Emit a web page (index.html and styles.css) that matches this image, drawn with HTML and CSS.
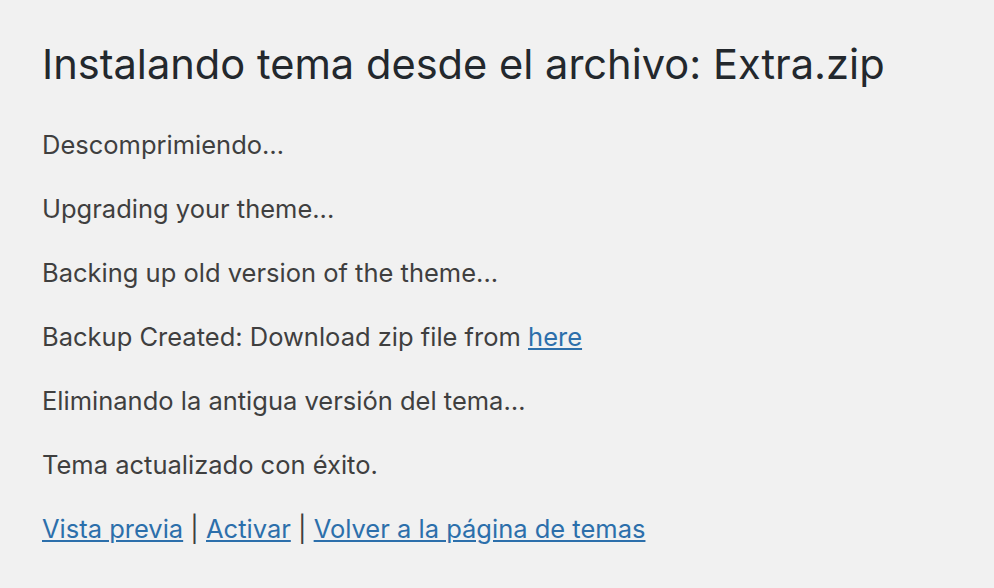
FILE: index.html
```html
<!DOCTYPE html>
<html lang="es">
<head>
<meta charset="utf-8">
<title>Instalando tema</title>
<link rel="stylesheet" href="styles.css">
</head>
<body>
<div class="wrap">
  <h1 class="title">Instalando tema desde el archivo: Extra.zip</h1>
  <p class="step">Descomprimiendo…</p>
  <p class="step">Upgrading your theme...</p>
  <p class="step">Backing up old version of the theme...</p>
  <p class="step">Backup Created: Download zip file from <a href="#">here</a></p>
  <p class="step">Eliminando la antigua versión del tema…</p>
  <p class="step">Tema actualizado con éxito.</p>
  <p class="step actions"><a href="#">Vista previa</a> | <a href="#">Activar</a> | <a href="#">Volver a la página de temas</a></p>
</div>
</body>
</html>
```
FILE: styles.css
```css
html, body {
  margin: 0;
  padding: 0;
  background: #f1f1f1;
}
body {
  font-family: Inter, "Liberation Sans", sans-serif;
  color: #3f3f3f;
}
.wrap {
  padding: 36px 0 0 42px;
}
.title {
  font-size: 41.6px;
  font-weight: 400;
  color: #23282d;
  line-height: 57px;
  margin: 0 0 33px;
}
.step {
  font-size: 25.5px;
  line-height: 38px;
  margin: 0 0 26px;
}
a {
  color: #2c6fab;
  text-decoration: underline;
}
```
